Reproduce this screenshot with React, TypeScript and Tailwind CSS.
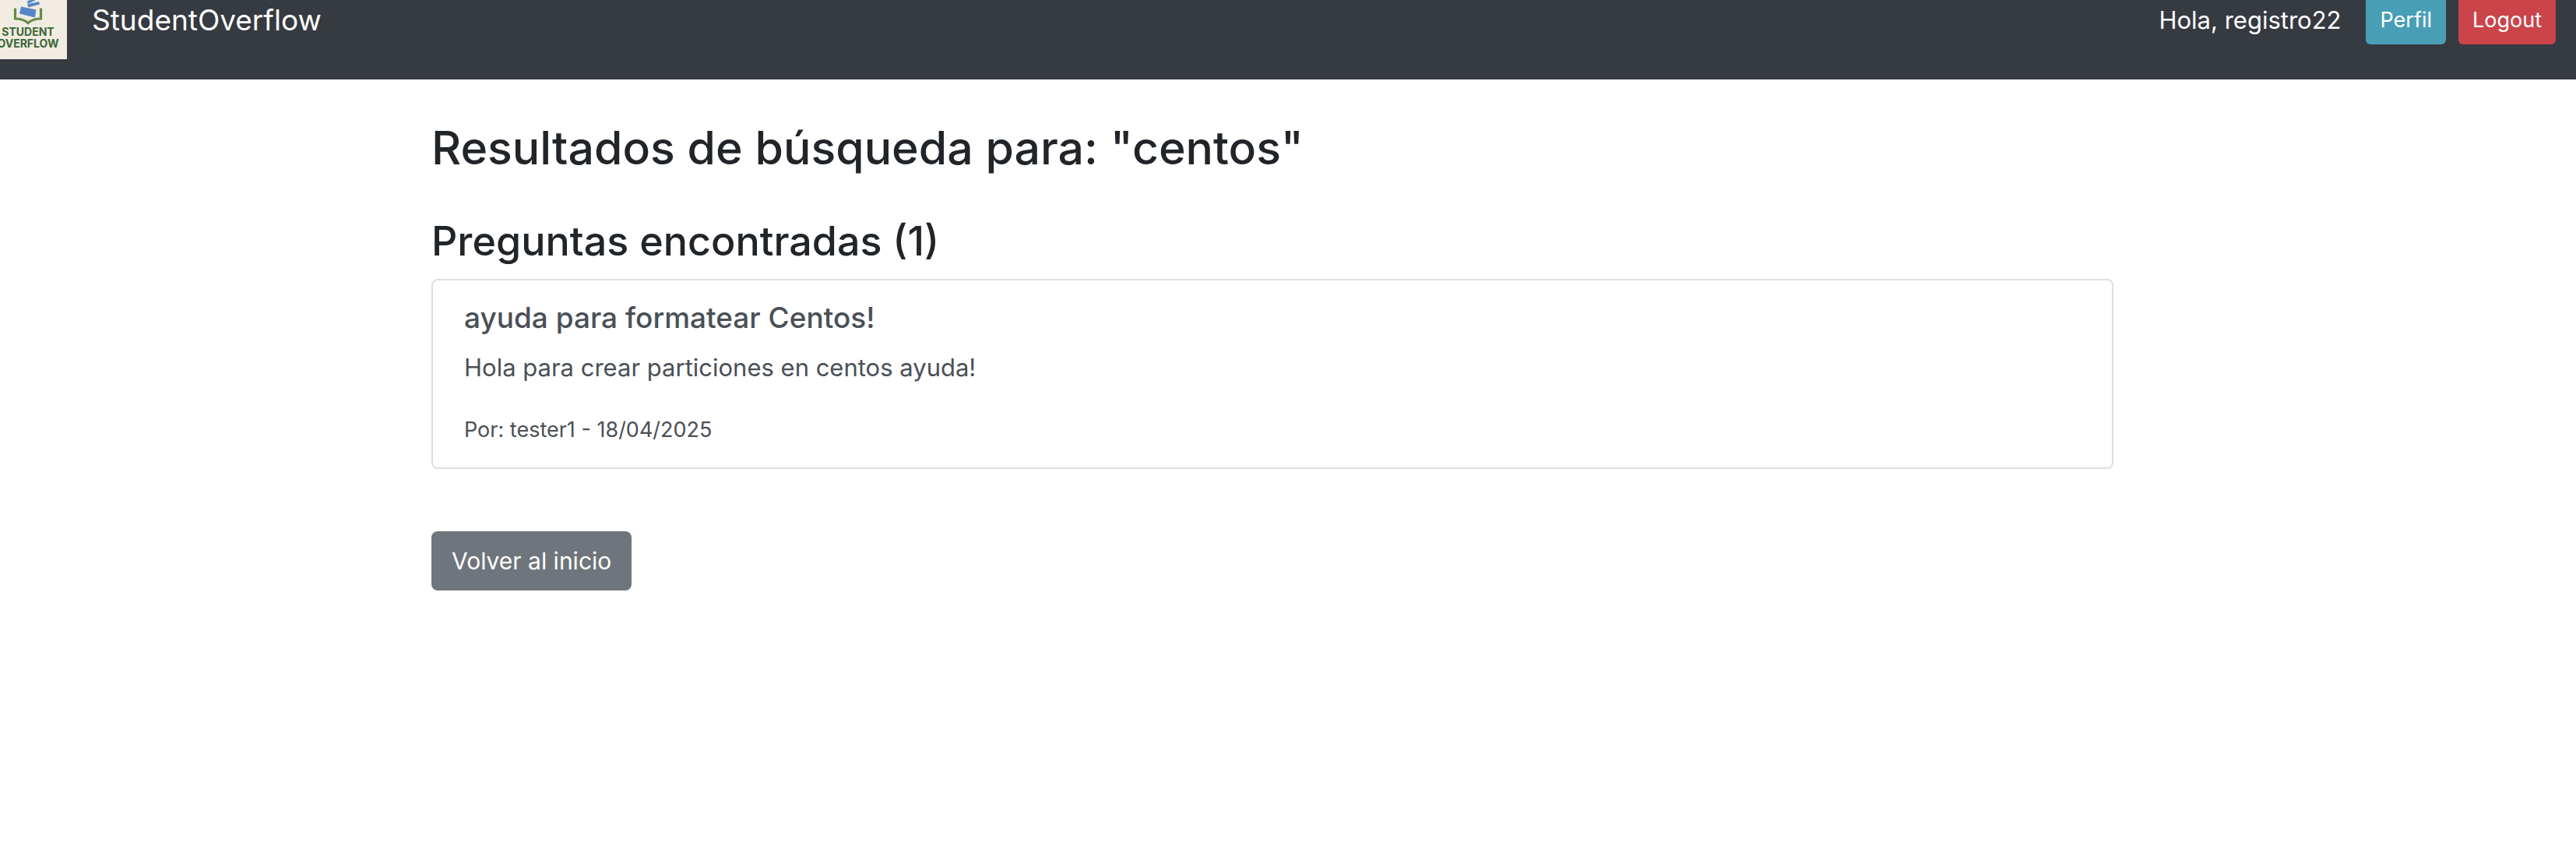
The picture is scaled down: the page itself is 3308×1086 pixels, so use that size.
function Logo() {
  return (
    <svg className="size-[100px] shrink-0" viewBox="0 0 100 100" role="img" aria-label="Student Overflow">
      <rect width="100" height="100" fill="#f1ece1" />
      <path d="M33.500 34.500v13.500c7 0 12 1.500 16.500 5.500 4.500-4 9.500-5.500 16.500-5.500v-13.500" fill="none" stroke="#658a49" strokeWidth="3.200" />
      <path d="M41 32.500 60.500 36.500 58.800 46.500 39 41.500Z" fill="#5586c8" />
      <path d="M49 29.500 64 26 65 29.500 50.500 33.500Z" fill="#5586c8" />
      <path d="M48.500 26 60 20 61 23.500 50 29Z" fill="#5586c8" />
      <g fill="#3b6637" fontFamily="Inter, sans-serif" fontWeight="700" fontSize="14" textAnchor="middle">
        <text x="50" y="70">STUDENT</text>
        <text x="50" y="85">OVERFLOW</text>
      </g>
    </svg>
  );
}

function Navbar() {
  return (
    <nav className="flex items-center justify-between bg-[#363a41] px-8 py-[26px] text-white">
      <a href="#" className="flex items-center gap-8 text-[37px] leading-[60px]">
        <Logo />
        StudentOverflow
      </a>
      <div className="flex items-center gap-4">
        <span className="mr-4 text-[31px] leading-12">Hola, registro22</span>
        <a href="#perfil" className="rounded-md bg-[#489fb5] px-[18px] py-[10px] text-[27px] leading-[42px]">
          Perfil
        </a>
        <button type="button" className="rounded-md bg-[#cb444a] px-[18px] py-[10px] text-[27px] leading-[42px]">
          Logout
        </button>
      </div>
    </nav>
  );
}

function QuestionCard() {
  return (
    <a href="#pregunta" className="block rounded-lg border-2 border-[#dfdfdf] px-10 py-6 text-[#495057]">
      <h5 className="mb-4 text-[37px] leading-12 font-medium">ayuda para formatear Centos!</h5>
      <p className="mb-8 text-[31px] leading-12">Hola para crear particiones en centos ayuda!</p>
      <small className="block text-[27px] leading-12">Por: tester1 - 18/04/2025</small>
    </a>
  );
}

export default function App() {
  return (
    <div className="overflow-hidden bg-white font-['Inter',sans-serif]">
      <div className="-mt-[50px] -mr-[6px] -ml-[46px]">
        <Navbar />
        <main className="mx-auto max-w-[2160px] pt-12 text-[#212529]">
          <h2 className="mb-12 text-[59px] leading-20 font-medium">Resultados de búsqueda para: "centos"</h2>
          <h3 className="mb-4 text-[52px] leading-16 font-medium">Preguntas encontradas (1)</h3>
          <QuestionCard />
          <a
            href="#inicio"
            className="mt-20 inline-block rounded-lg bg-[#6e757c] px-[26px] py-[14px] text-[30px] leading-12 text-white"
          >
            Volver al inicio
          </a>
        </main>
      </div>
    </div>
  );
}
